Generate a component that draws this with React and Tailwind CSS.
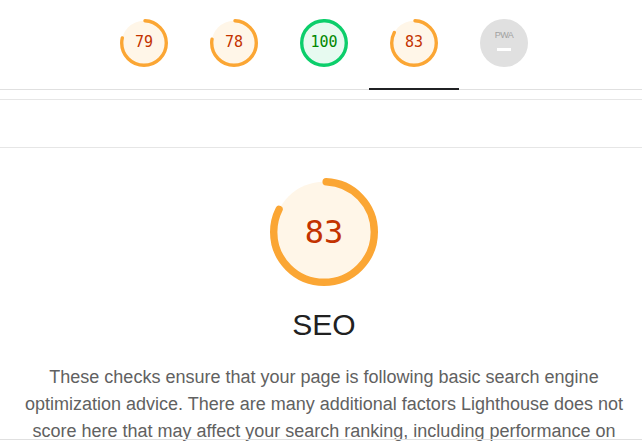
import React from 'react';

const COLORS = {
  average: { stroke: '#fba634', fill: '#fff6e8', text: '#c33300' },
  pass: { stroke: '#0cce6b', fill: '#e7faf0', text: '#008800' },
};

function Gauge({ score, size, stroke, textClass }) {
  const c = score >= 90 ? COLORS.pass : COLORS.average;
  const r = (size - stroke) / 2;
  const circ = 2 * Math.PI * r;
  const arc = Math.max(0, (score / 100) * circ - stroke * 0.6);
  return (
    <div className="relative flex items-center justify-center" style={{ width: size, height: size }}>
      <svg width={size} height={size} viewBox={`0 0 ${size} ${size}`} className="absolute inset-0 -rotate-90">
        <circle cx={size / 2} cy={size / 2} r={r} fill={c.fill} stroke="none" />
        <circle
          cx={size / 2}
          cy={size / 2}
          r={r}
          fill="none"
          stroke={c.stroke}
          strokeWidth={stroke}
          strokeLinecap="round"
          strokeDasharray={`${arc} ${circ}`}
          strokeDashoffset={-stroke * 0.3}
        />
      </svg>
      <span className={`relative font-['DejaVu_Sans_Mono',monospace] ${textClass}`} style={{ color: c.text }}>
        {score}
      </span>
    </div>
  );
}

function PwaBadge() {
  return (
    <div className="flex h-12 w-12 flex-col items-center justify-center rounded-full bg-[#e0e0e0]">
      <span className="mt-[-4px] font-['Liberation_Sans',sans-serif] text-[9px] leading-none tracking-[-0.5px] text-[#a0a0a0]">
        PWA
      </span>
      <span className="mt-[8px] h-[3px] w-[14px] bg-white" />
    </div>
  );
}

export default function App() {
  const tabs = [79, 78, 100, 83];
  return (
    <div className="relative h-[441px] overflow-hidden bg-white font-['Liberation_Sans',sans-serif]">
      <div className="flex h-[90px] justify-center border-b border-[#e0e0e0] pl-[6px]">
        {tabs.map((s, i) => (
          <div key={i} className="relative flex w-[90px] items-center justify-center pb-[4px]">
            <Gauge score={s} size={48} stroke={3.4} textClass="text-[15px] leading-none" />
            {i === 3 && <span className="absolute bottom-[-1px] left-0 h-[2px] w-full bg-[#202124]" />}
          </div>
        ))}
        <div className="flex w-[90px] items-center justify-center pb-[4px]">
          <PwaBadge />
        </div>
      </div>
      <div className="mt-[9px] h-[49px] border-y border-[#e6e6e6]" />
      <div className="flex flex-col items-center pl-[6px] pt-[30px]">
        <Gauge score={83} size={108} stroke={7.4} textClass="text-[32px] leading-none" />
        <h2 className="mt-[21px] text-[30px] leading-[36px] text-[#212121]">SEO</h2>
        <p className="mt-[21px] w-[600px] text-center text-[18px] leading-[27px] text-[#616161]">
          These checks ensure that your page is following basic search engine optimization advice. There are many
          additional factors Lighthouse does not score here that may affect your search ranking, including performance
          on Core Web Vitals.
        </p>
      </div>
      <div className="absolute inset-x-0 bottom-[1px] h-px bg-[#e0e0e0]" />
    </div>
  );
}
